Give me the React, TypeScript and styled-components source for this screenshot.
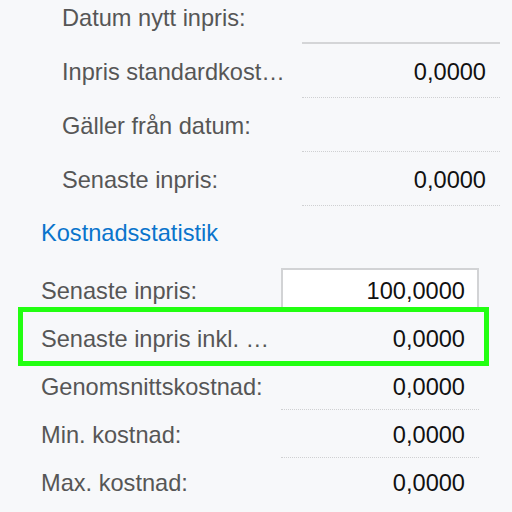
import React from 'react';
import styled, { createGlobalStyle } from 'styled-components';

type FieldProps = {
  line?: 'solid' | 'dotted' | 'none';
};

type RowProps = {
  tall?: boolean;
};

const GlobalStyle = createGlobalStyle`
  html, body {
    margin: 0;
    padding: 0;
    background: #f7f8fa;
    overflow: hidden;
  }
  body {
    font-family: "Liberation Sans", Arial, sans-serif;
  }
`;

const rows = [
  { label: 'Datum nytt inpris:', value: '', line: 'solid' as const },
  { label: 'Inpris standardkost…', value: '0,0000', line: 'dotted' as const },
  { label: 'Gäller från datum:', value: '', line: 'dotted' as const },
  { label: 'Senaste inpris:', value: '0,0000', line: 'dotted' as const },
];

const stats = [
  { label: 'Genomsnittskostnad:', value: '0,0000' },
  { label: 'Min. kostnad:', value: '0,0000' },
  { label: 'Max. kostnad:', value: '0,0000' },
];

const App = () => {
  return (
    <>
      <GlobalStyle />
      <Page>
        <SubGroup>
          {rows.map((r) => (
            <Row key={r.label} tall>
              <Label>{r.label}</Label>
              <Field line={r.line}>{r.value}</Field>
            </Row>
          ))}
        </SubGroup>
        <Group>
          <Heading>Kostnadsstatistik</Heading>
          <Row>
            <Label>Senaste inpris:</Label>
            <Input>100,0000</Input>
          </Row>
          <Row>
            <Label>Senaste inpris inkl. …</Label>
            <Field line="none">0,0000</Field>
            <Highlight />
          </Row>
          {stats.map((s) => (
            <Row key={s.label}>
              <Label>{s.label}</Label>
              <Field line="dotted">{s.value}</Field>
            </Row>
          ))}
        </Group>
      </Page>
    </>
  );
};

export default App;

const Page = styled.div`
  width: 512px;
  height: 512px;
  margin-top: -10px;
  display: flex;
  flex-direction: column;
`;

const Group = styled.div`
  display: flex;
  flex-direction: column;
  padding-left: 41px;
`;

const SubGroup = styled(Group)`
  padding-left: 62px;
`;

const Row = styled.div<RowProps>`
  position: relative;
  display: grid;
  grid-template-columns: 240px 198px;
  width: 438px;
  align-items: center;
  height: ${(p) => (p.tall ? '54px' : '48px')};
  font-size: 23.6px;
`;

const Label = styled.div`
  color: #565656;
  white-space: nowrap;
  overflow: hidden;
  text-overflow: ellipsis;
  padding-right: 10px;
  padding-top: 3px;
`;

const Field = styled.div<FieldProps>`
  box-sizing: border-box;
  height: 100%;
  display: flex;
  align-items: center;
  justify-content: flex-end;
  padding: 3px 14px 0 0;
  color: #111;
  border-bottom: ${(p) =>
    p.line === 'solid' ? '2px solid #d4d5d7' : p.line === 'dotted' ? '1px dotted #cfd0d2' : 'none'};
`;

const Input = styled.div`
  box-sizing: border-box;
  height: 44px;
  display: flex;
  align-items: center;
  justify-content: flex-end;
  padding: 2px 12px 0 0;
  background: #fff;
  border: 2px solid #d2d3d5;
  color: #111;
`;

const Heading = styled.div`
  height: 60px;
  display: flex;
  align-items: center;
  padding-bottom: 6px;
  box-sizing: border-box;
  font-size: 23.6px;
  color: #0a74cc;
`;

const Highlight = styled.div`
  position: absolute;
  left: -23px;
  right: -10px;
  top: -7px;
  bottom: -4px;
  border: 5px solid #22ff11;
  pointer-events: none;
`;
